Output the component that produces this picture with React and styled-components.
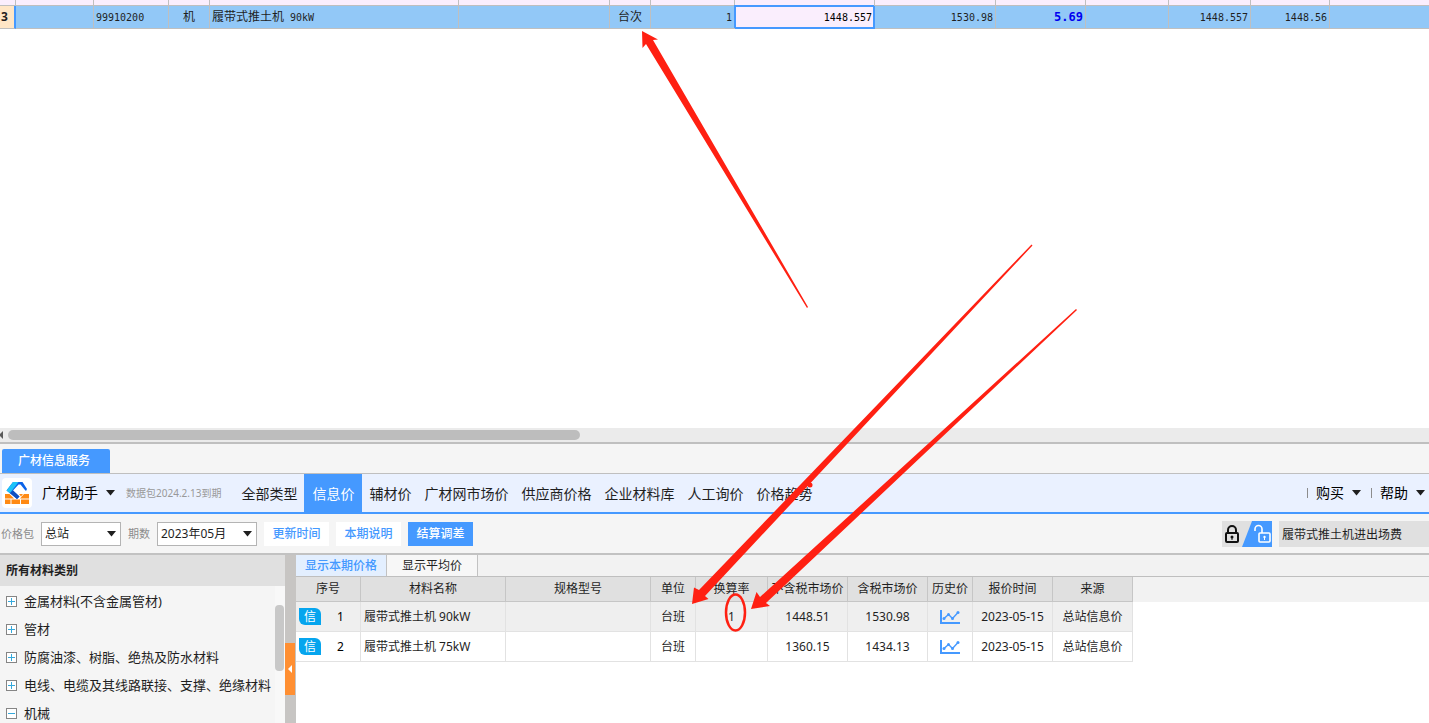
import React, {useState} from 'react';
import styled, {createGlobalStyle} from 'styled-components';

const GlobalStyle = createGlobalStyle`
    *{
        margin: 0;
        padding: 0;
        box-sizing: border-box;
    }
    body{
        background: #fff;
        color: #1f1f1f;
        font-family: "Noto Sans", "Noto Sans CJK SC", sans-serif;
        font-size: 12px;
        line-height: 16px;
        overflow: hidden;
    }
    button, input, select{
        font: inherit;
        color: inherit;
        border: none;
        border-radius: 0;
        outline: none;
    }
    table{
        border-collapse: separate;
        border-spacing: 0;
        table-layout: fixed;
    }
`;

const sheetColumns = [16, 78, 75, 41, 249, 151, 41, 84, 140, 121, 90, 83, 82, 79];
const priceColumns = [65, 145, 145, 45, 72, 80, 80, 45, 80, 80];
const priceHeads = ['序号', '材料名称', '规格型号', '单位', '换算率', '不含税市场价', '含税市场价', '历史价', '报价时间', '来源'];
const priceRows = [
    {name: '履带式推土机 90kW', unit: '台班', rate: '1', noTax: '1448.51', tax: '1530.98', date: '2023-05-15', from: '总站信息价'},
    {name: '履带式推土机 75kW', unit: '台班', rate: '', noTax: '1360.15', tax: '1434.13', date: '2023-05-15', from: '总站信息价'},
];
const navItems = ['全部类型', '信息价', '辅材价', '广材网市场价', '供应商价格', '企业材料库', '人工询价', '价格趋势'];
const categories = [
    {name: '金属材料(不含金属管材)'},
    {name: '管材'},
    {name: '防腐油漆、树脂、绝热及防水材料'},
    {name: '电线、电缆及其线路联接、支撑、绝缘材料'},
    {name: '机械', open: true},
];

const Columns = ({widths}) => (
    <colgroup>
        {widths.map((w, i) => <col key={i} style={{width: w}} />)}
        <col />
    </colgroup>
)

const Caret = () => (
    <svg width="9" height="6" viewBox="0 0 9 6" aria-hidden="true">
        <path d="M0 0h9L4.500 5.500z" fill="#1f1f1f" />
    </svg>
)

const Logo = () => (
    <svg width="30" height="30" viewBox="0 0 30 30" aria-hidden="true">
        <rect width="30" height="30" rx="4" fill="#fff" />
        <path d="M3 16h4.500l4.500 4.500H3zM17 16h4l-2 2.500zM22 16h5v4.500h-9zM3 21.500h5.500v4.500H3zM9.500 21.500h8.500v4.500H9.500zM19 21.500h8v4.500h-8z" fill="#ff8a14" />
        <path d="M11 4h9.500l4.500 7-1 2-1.500-1.500L18.500 6.500h-2L11 12.500l6.500 6-2.500 2.500L4.500 12.500z" fill="#0a62e8" />
        <path d="M11 4h5.500L8 15.300 4.500 12.500z" fill="#1cc3f8" />
        <path d="M11 12.500l6.500 6L15 21l-7-6z" fill="#1050c0" />
    </svg>
)

const LockIcons = () => (
    <svg width="50" height="26" viewBox="0 0 50 26" aria-hidden="true">
        <rect width="50" height="26" fill="#e0e0e0" />
        <path d="M30 0h20v26H20z" fill="#4599ff" />
        <g fill="none" stroke="#111" strokeWidth="2">
            <rect x="4" y="12" width="12" height="9" rx="1" />
            <path d="M6 12V9a4 4 0 0 1 8 0v3" />
        </g>
        <circle cx="10" cy="16" r="1.500" fill="#111" />
        <path d="M9.500 16h1v3h-1z" fill="#111" />
        <g fill="none" stroke="#fff" strokeWidth="1.600">
            <rect x="37" y="12" width="11" height="9" rx="1" />
            <path d="M33 10V8a3.500 3.500 0 0 1 7 0v4" />
        </g>
        <circle cx="42.500" cy="16" r="1.200" fill="#fff" />
        <path d="M42 16h1v3h-1z" fill="#fff" />
    </svg>
)

const ChartIcon = () => (
    <svg width="20" height="15" viewBox="0 0 20 15" aria-hidden="true">
        <path d="M1 0v13h19" fill="none" stroke="#4599ff" strokeWidth="2" />
        <path d="M4 8.500L8.500 4.500l4 4L18 2.500" fill="none" stroke="#4599ff" strokeWidth="1.400" />
        <g fill="#4599ff">
            <circle cx="4" cy="8.500" r="1.500" />
            <circle cx="8.500" cy="4.500" r="1.500" />
            <circle cx="12.500" cy="8.500" r="1.500" />
            <circle cx="18" cy="2.500" r="1.500" />
        </g>
    </svg>
)

const TreeBox = ({open}) => (
    <svg width="11" height="11" viewBox="0 0 11 11" aria-hidden="true">
        <rect x="0.500" y="0.500" width="10" height="10" fill="#fff" stroke="#858585" />
        <path d={open ? 'M2 5.500h7' : 'M2 5.500h7M5.500 2v7'} stroke="#35a9dc" />
    </svg>
)

const Picker = ({id, label, options, width}) => (
    <>
        <FieldLabel htmlFor={id}>{label}</FieldLabel>
        <SelectBox $width={width}>
            <select id={id}>
                {options.map(o => <option key={o}>{o}</option>)}
            </select>
            <Caret />
        </SelectBox>
    </>
)

// hand drawn marks above both panels
const Marks = () => (
    <MarksLayer width="1429" height="723" viewBox="0 0 1429 723" aria-hidden="true">
        <g fill="#ff2012">
            <path d="M642 31L658 39.500 653 40 808 307 807 308 646 44 642.500 48z" />
            <path d="M692 604L694 587.500 699 590 1031.500 244.500 1032.500 245.500 705 596 708.500 599z" />
            <path d="M751 609L756.500 592 760 597 1076 309 1077 310 766 603 770 606z" />
            <circle cx="810" cy="485" r="2.500" />
        </g>
        <ellipse cx="735.500" cy="612.500" rx="9.500" ry="18" fill="none" stroke="#ff2012" strokeWidth="2.500" />
    </MarksLayer>
)

function Sheet() {
    return (
        <SheetStyled>
            <table>
                <Columns widths={sheetColumns} />
                <tbody>
                    <tr className="previous">
                        {[...sheetColumns, 0].map((c, i) => <td key={i}></td>)}
                    </tr>
                    <tr className="selected">
                        <th scope="row">3</th>
                        <td></td>
                        <td><Mono>99910200</Mono></td>
                        <td className="center">机</td>
                        <td>履带式推土机<Mono> 90kW</Mono></td>
                        <td></td>
                        <td className="center">台次</td>
                        <td className="right"><Mono>1</Mono></td>
                        <td className="right editing"><Mono>1448.557</Mono></td>
                        <td className="right"><Mono>1530.98</Mono></td>
                        <td className="right"><Mono $strong>5.69</Mono></td>
                        <td></td>
                        <td className="right"><Mono>1448.557</Mono></td>
                        <td className="right"><Mono>1448.56</Mono></td>
                        <td></td>
                    </tr>
                </tbody>
            </table>
        </SheetStyled>
    )
}

function PriceTable() {
    return (
        <PriceTableStyled>
            <table>
                <Columns widths={priceColumns} />
                <thead>
                    <tr>
                        {priceHeads.map(h => <th key={h} scope="col">{h}</th>)}
                        <td></td>
                    </tr>
                </thead>
                <tbody>
                    {priceRows.map((row, i) => (
                        <tr key={row.name}>
                            <td>
                                <Order><Badge>信</Badge><span>{i + 1}</span></Order>
                            </td>
                            <td className="name">{row.name}</td>
                            <td></td>
                            <td>{row.unit}</td>
                            <td>{row.rate}</td>
                            <td>{row.noTax}</td>
                            <td>{row.tax}</td>
                            <td><IconButton aria-label="历史价"><ChartIcon /></IconButton></td>
                            <td>{row.date}</td>
                            <td>{row.from}</td>
                        </tr>
                    ))}
                </tbody>
            </table>
        </PriceTableStyled>
    )
}

function App() {
    const [nav, setNav] = useState('信息价');
    const [keyword, setKeyword] = useState('履带式推土机进出场费');

    return (
        <Page>
            <GlobalStyle />
            <Sheet />
            <ScrollBar>
                <svg width="4" height="8" viewBox="0 0 4 8" aria-hidden="true"><path d="M3 0v8L-1 4z" fill="#5a5a5a" /></svg>
                <ScrollThumb />
            </ScrollBar>
            <Dock>
                <DockTabs>
                    <DockTab>广材信息服务</DockTab>
                </DockTabs>
                <NavBar>
                    <Logo />
                    <Brand>广材助手 <Caret /></Brand>
                    <Expire>数据包2024.2.13到期</Expire>
                    <NavList>
                        {navItems.map(item => (
                            <NavItem key={item} $active={item === nav} onClick={() => setNav(item)}>{item}</NavItem>
                        ))}
                    </NavList>
                    <NavRight>
                        <MenuButton>购买 <Caret /></MenuButton>
                        <MenuButton>帮助 <Caret /></MenuButton>
                    </NavRight>
                </NavBar>
                <ToolBar>
                    <Picker id="package" label="价格包" options={['总站']} width={80} />
                    <Picker id="period" label="期数" options={['2023年05月']} width={100} />
                    <ToolButton>更新时间</ToolButton>
                    <ToolButton>本期说明</ToolButton>
                    <ToolButton $filled>结算调差</ToolButton>
                    <LockButton aria-label="锁定"><LockIcons /></LockButton>
                    <SearchInput aria-label="材料名称" value={keyword} onChange={e => setKeyword(e.target.value)} />
                </ToolBar>
                <Content>
                    <SideBar>
                        <h2>所有材料类别</h2>
                        <div className="tree">
                            <ul>
                                {categories.map(c => (
                                    <li key={c.name}><TreeBox open={c.open} />{c.name}</li>
                                ))}
                            </ul>
                            <TreeScroll><i /></TreeScroll>
                        </div>
                    </SideBar>
                    <Splitter>
                        <button aria-label="收起">
                            <svg width="4" height="8" viewBox="0 0 4 8" aria-hidden="true"><path d="M4 0v8L0 4z" fill="#fff" /></svg>
                        </button>
                    </Splitter>
                    <Result>
                        <ResultTabs>
                            <ResultTab $active>显示本期价格</ResultTab>
                            <ResultTab>显示平均价</ResultTab>
                        </ResultTabs>
                        <PriceTable />
                    </Result>
                </Content>
            </Dock>
            <Marks />
        </Page>
    )
}

const Page = styled.main`
    position: relative;
    display: flex;
    flex-direction: column;
    height: 100vh;
    overflow: hidden;
`;

const MarksLayer = styled.svg`
    position: absolute;
    top: 0;
    left: 0;
    pointer-events: none;
`;

const SheetStyled = styled.section`
    flex: 1;
    min-height: 0;
    table{
        width: 100%;
    }
    td, th{
        border-right: 1px solid #bfbfbf;
        border-bottom: 1px solid #bfbfbf;
        white-space: nowrap;
    }
    td:last-child{
        border-right: none;
    }
    .previous td{
        height: 6px;
        background: #faeefd;
    }
    .selected{
        td{
            height: 23px;
            padding: 0 2px;
            background: #92c8f7;
        }
        th{
            padding-left: 1px;
            background: #ffe6c6;
            border-right: 2px solid #4599ff;
            font-weight: bold;
            text-align: left;
        }
        .center{
            text-align: center;
        }
        .right{
            text-align: right;
        }
        .editing{
            background: #faeefd;
            color: #000;
            border-color: #4599ff;
            box-shadow: inset 0 0 0 1px #4599ff, -1px -1px 0 #4599ff;
        }
    }
`;

const Mono = styled.span`
    font-family: "DejaVu Sans Mono", monospace;
    font-size: ${p => p.$strong ? '12px' : '10px'};
    font-weight: ${p => p.$strong ? 'bold' : 'normal'};
    color: ${p => p.$strong ? '#0000f0' : 'inherit'};
    white-space: pre;
`;

const ScrollBar = styled.div`
    display: flex;
    align-items: center;
    gap: 4px;
    height: 14px;
    flex: none;
    background: #ebebeb;
`;

const ScrollThumb = styled.div`
    width: 40%;
    height: 10px;
    border-radius: 5px;
    background: #bdbdbd;
`;

const Dock = styled.section`
    display: flex;
    flex-direction: column;
    flex: 0 0 281px;
    min-height: 0;
    border-top: 2px solid #bfbfbf;
    background: #f5f5f5;
`;

const DockTabs = styled.div`
    display: flex;
    flex: none;
    padding: 5px 2px 0;
    border-bottom: 1px solid #bfbfbf;
`;

const DockTab = styled.button`
    width: 108px;
    height: 24px;
    padding: 0 16px;
    border-radius: 2px 2px 0 0;
    background: #4599ff;
    color: #fff;
    font-weight: 500;
    text-align: left;
    white-space: nowrap;
`;

const NavBar = styled.nav`
    display: flex;
    align-items: center;
    height: 40px;
    flex: none;
    padding-left: 2px;
    border-bottom: 2px solid #4599ff;
    background: #eaf1ff;
    font-size: 14px;
    white-space: nowrap;
`;

const MenuButton = styled.button`
    display: flex;
    align-items: center;
    gap: 8px;
    background: none;
    color: #000;
`;

const Brand = styled(MenuButton)`
    margin-left: 10px;
`;

const Expire = styled.span`
    margin-left: 11px;
    color: #999;
    font-size: 10px;
`;

const NavList = styled.div`
    display: flex;
    align-self: stretch;
    gap: 1px;
    margin-left: 14px;
`;

const NavItem = styled.button`
    padding: 2px ${p => p.$active ? '8px' : '6px'} 0;
    background: ${p => p.$active ? '#4599ff' : 'none'};
    color: ${p => p.$active ? '#fff' : 'inherit'};
`;

const NavRight = styled.div`
    display: flex;
    gap: 10px;
    margin-left: auto;
    padding-right: 4px;
    button::before{
        content: "";
        width: 1px;
        height: 10px;
        background: #8c8c8c;
    }
`;

const ToolBar = styled.div`
    display: flex;
    align-items: center;
    height: 39px;
    flex: none;
    padding-left: 1px;
`;

const FieldLabel = styled.label`
    margin-right: 7px;
    color: #8c8c8c;
    font-size: 11px;
    white-space: nowrap;
`;

const SelectBox = styled.div`
    display: grid;
    grid-template-columns: 1fr;
    align-items: center;
    width: ${p => p.$width}px;
    height: 24px;
    margin-right: 7px;
    border: 1px solid #b4b4b4;
    background: #fff;
    select{
        grid-area: 1 / 1;
        height: 22px;
        padding-left: 3px;
        appearance: none;
        background: none;
    }
    svg{
        grid-area: 1 / 1;
        justify-self: end;
        margin-right: 4px;
        pointer-events: none;
    }
`;

const ToolButton = styled.button`
    width: 65px;
    height: 24px;
    margin-right: 7px;
    background: ${p => p.$filled ? '#4599ff' : '#fff'};
    color: ${p => p.$filled ? '#fff' : '#4599ff'};
    font-weight: 500;
`;

const IconButton = styled.button`
    display: inline-flex;
    background: none;
    vertical-align: middle;
`;

const LockButton = styled(IconButton)`
    margin-left: auto;
    margin-right: 7px;
`;

const SearchInput = styled.input`
    width: 150px;
    height: 26px;
    padding-left: 3px;
    background: #e0e0e0;
`;

const Content = styled.div`
    display: flex;
    flex: 1;
    min-height: 0;
    border-top: 2px solid #c2c2c2;
`;

const SideBar = styled.aside`
    display: flex;
    flex-direction: column;
    width: 285px;
    h2{
        padding: 0 6px;
        background: #e0e0e0;
        font-size: 12px;
        line-height: 31px;
        flex: none;
    }
    .tree{
        display: flex;
        flex: 1;
        min-height: 0;
        overflow: hidden;
    }
    ul{
        flex: 1;
        padding-top: 1px;
        list-style: none;
    }
    li{
        display: flex;
        align-items: center;
        gap: 7px;
        height: 28px;
        padding-left: 6px;
        font-size: 13px;
        white-space: nowrap;
    }
`;

const TreeScroll = styled.div`
    width: 10px;
    padding-top: 19px;
    background: #f8f8f8;
    i{
        display: block;
        width: 9px;
        height: 66px;
        border-radius: 4px;
        background: #c8c8c8;
    }
`;

const Splitter = styled.div`
    display: flex;
    align-items: center;
    width: 11px;
    padding-top: 60px;
    background: #c7c5c3;
    button{
        display: flex;
        align-items: center;
        justify-content: center;
        width: 10px;
        height: 52px;
        background: #ff8f32;
    }
`;

const Result = styled.div`
    flex: 1;
    min-width: 0;
    background: #fff;
`;

const ResultTabs = styled.div`
    display: flex;
    background: #f2f2f2;
`;

const ResultTab = styled.button`
    width: 91px;
    height: 21px;
    border-right: 1px solid #c2c2c2;
    background: ${p => p.$active ? '#e3efff' : '#f7f7f7'};
    color: ${p => p.$active ? '#4599ff' : 'inherit'};
    font-weight: ${p => p.$active ? 500 : 400};
`;

const PriceTableStyled = styled.div`
    border-top: 1px solid #bfbfbf;
    table{
        width: 100%;
    }
    thead{
        th{
            height: 25px;
            background: #e0e0e0;
            border-right: 1px solid #c6c6c6;
            border-bottom: 1px solid #c6c6c6;
            font-weight: normal;
            white-space: nowrap;
        }
        td{
            background: #f2f2f2;
        }
    }
    tbody{
        td{
            height: 30px;
            border-right: 1px solid #e2e2e2;
            border-bottom: 1px solid #e2e2e2;
            text-align: center;
            white-space: nowrap;
        }
        tr:first-child td{
            background: #efefef;
        }
        .name{
            padding-left: 3px;
            text-align: left;
        }
    }
`;

const Order = styled.div`
    display: flex;
    align-items: center;
    gap: 16px;
    padding-left: 3px;
    color: #000;
`;

const Badge = styled.span`
    width: 22px;
    height: 17px;
    border-radius: 0 6px 0 6px;
    background: #06a5ee;
    color: #fff;
    line-height: 17px;
`;

export default App
